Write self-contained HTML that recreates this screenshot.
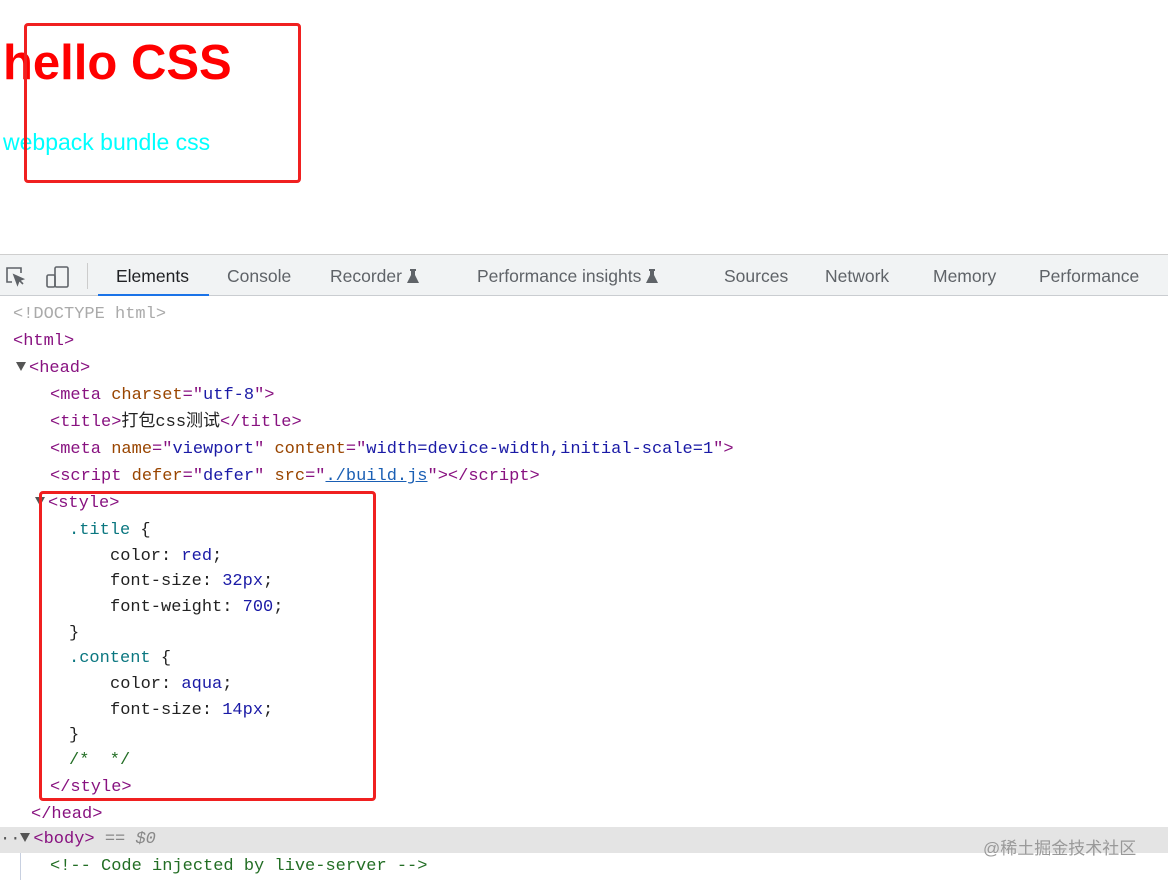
<!DOCTYPE html>
<html><head><meta charset="utf-8"><style>
body{margin:0;width:1168px;height:880px;overflow:hidden;background:#fff;position:relative;font-family:"Liberation Sans",sans-serif}
.a{position:absolute;white-space:pre}
.box{position:absolute;border:3px solid #f02020;border-radius:4px;box-sizing:border-box}
.tb{position:absolute;left:0;top:254px;width:1168px;height:42px;background:#f1f3f4;border-top:1px solid #cfcfcf;border-bottom:1px solid #cacdd1;box-sizing:border-box}
.tab{position:absolute;top:11px;font-size:17.5px;color:#5f6368}
.c{position:absolute;left:0;white-space:pre;font-family:"Liberation Mono","Noto Sans CJK SC",monospace;font-size:17px;line-height:26px;height:26px;margin-top:2px}
.t{color:#881280}.n{color:#994500}.v{color:#1a1aa6}.s{color:#0b7780}.g{color:#236e25}.p{color:#222}.u{color:#1a5fb4;text-decoration:underline}
.tri{display:inline-block;width:0;height:0;border-left:5px solid transparent;border-right:5px solid transparent;border-top:9px solid #555;margin-right:3px;vertical-align:1px}
.fl{display:inline-block;width:12px;height:14px;vertical-align:-1px}
</style></head><body>
<div class="a" style="left:3px;top:35px;font-size:49px;font-weight:bold;color:#ff0000">hello CSS</div>
<div class="a" style="left:3px;top:129px;font-size:23px;color:#00ffff">webpack bundle css</div>
<div class="box" style="left:24px;top:23px;width:277px;height:160px"></div>

<div class="tb">
<svg style="position:absolute;left:4px;top:10px" width="24" height="24" viewBox="0 0 24 24" fill="none" stroke="#5f6368" stroke-width="1.6"><path d="M8 17H3V3h14v5"/><path d="M10 10l9 4-4 1.5-1.5 4z" fill="#5f6368"/><path d="M15 15l4 4"/></svg>
<svg style="position:absolute;left:45px;top:9px" width="26" height="26" viewBox="0 0 26 26" fill="none" stroke="#5f6368" stroke-width="1.6"><rect x="10" y="3" width="13" height="20" rx="1.5"/><rect x="2" y="11" width="8" height="12" rx="1.5"/></svg>
<div style="position:absolute;left:87px;top:8px;width:1px;height:26px;background:#ccc"></div>
<div class="tab" style="left:116px;color:#202124">Elements</div>
<div style="position:absolute;left:98px;top:39px;width:111px;height:2px;background:#1a73e8"></div>
<div class="tab" style="left:227px">Console</div>
<div class="tab" style="left:330px">Recorder <svg class="fl" viewBox="0 0 12 14"><path d="M3 0h6v2H8v4l4 8H0l4-8V2H3z" fill="#5f6368"/></svg></div>
<div class="tab" style="left:477px">Performance insights <svg class="fl" viewBox="0 0 12 14"><path d="M3 0h6v2H8v4l4 8H0l4-8V2H3z" fill="#5f6368"/></svg></div>
<div class="tab" style="left:724px">Sources</div>
<div class="tab" style="left:825px">Network</div>
<div class="tab" style="left:933px">Memory</div>
<div class="tab" style="left:1039px">Performance</div>
</div>

<div style="position:absolute;left:0;top:827px;width:1168px;height:26px;background:#e4e4e4"></div>
<div style="position:absolute;left:20px;top:853px;width:1px;height:27px;background:#c8d0e0"></div>

<div class="c" style="top:300px;left:13px;color:#aaa">&lt;!DOCTYPE html&gt;</div>
<div class="c t" style="top:327px;left:13px">&lt;html&gt;</div>
<div class="c" style="top:354px;left:16px"><span class="tri"></span><span class="t">&lt;head&gt;</span></div>
<div class="c" style="top:381px;left:50px"><span class="t">&lt;meta </span><span class="n">charset</span><span class="t">="</span><span class="v">utf-8</span><span class="t">"&gt;</span></div>
<div class="c" style="top:408px;left:50px"><span class="t">&lt;title&gt;</span><span class="p">打包css测试</span><span class="t">&lt;/title&gt;</span></div>
<div class="c" style="top:435px;left:50px"><span class="t">&lt;meta </span><span class="n">name</span><span class="t">="</span><span class="v">viewport</span><span class="t">" </span><span class="n">content</span><span class="t">="</span><span class="v">width=device-width,initial-scale=1</span><span class="t">"&gt;</span></div>
<div class="c" style="top:462px;left:50px"><span class="t">&lt;script </span><span class="n">defer</span><span class="t">="</span><span class="v">defer</span><span class="t">" </span><span class="n">src</span><span class="t">="</span><span class="u">./build.js</span><span class="t">"&gt;&lt;/script&gt;</span></div>
<div class="c" style="top:489px;left:35px"><span class="tri"></span><span class="t">&lt;style&gt;</span></div>
<div class="c" style="top:516px;left:69px"><span class="s">.title</span><span class="p"> {</span></div>
<div class="c p" style="top:542px;left:110px">color: <span class="v">red</span>;</div>
<div class="c p" style="top:567px;left:110px">font-size: <span class="v">32px</span>;</div>
<div class="c p" style="top:593px;left:110px">font-weight: <span class="v">700</span>;</div>
<div class="c p" style="top:619px;left:69px">}</div>
<div class="c" style="top:644px;left:69px"><span class="s">.content</span><span class="p"> {</span></div>
<div class="c p" style="top:670px;left:110px">color: <span class="v">aqua</span>;</div>
<div class="c p" style="top:696px;left:110px">font-size: <span class="v">14px</span>;</div>
<div class="c p" style="top:721px;left:69px">}</div>
<div class="c g" style="top:746px;left:69px">/*  */</div>
<div class="c t" style="top:773px;left:50px">&lt;/style&gt;</div>
<div class="box" style="left:39px;top:491px;width:337px;height:310px"></div>
<div class="c t" style="top:800px;left:31px">&lt;/head&gt;</div>
<div class="c" style="top:825px;left:0px"><span style="color:#555">··</span><span class="tri" style="margin-left:0"></span><span class="t">&lt;body&gt;</span><span style="color:#888"> == <i>$0</i></span></div>
<div class="a" style="left:983px;top:834px;font-size:17px;color:#999;font-family:'Liberation Sans','Noto Sans CJK SC',sans-serif">@稀土掘金技术社区</div>
<div class="c g" style="top:852px;left:50px">&lt;!-- Code injected by live-server --&gt;</div>
</body></html>
